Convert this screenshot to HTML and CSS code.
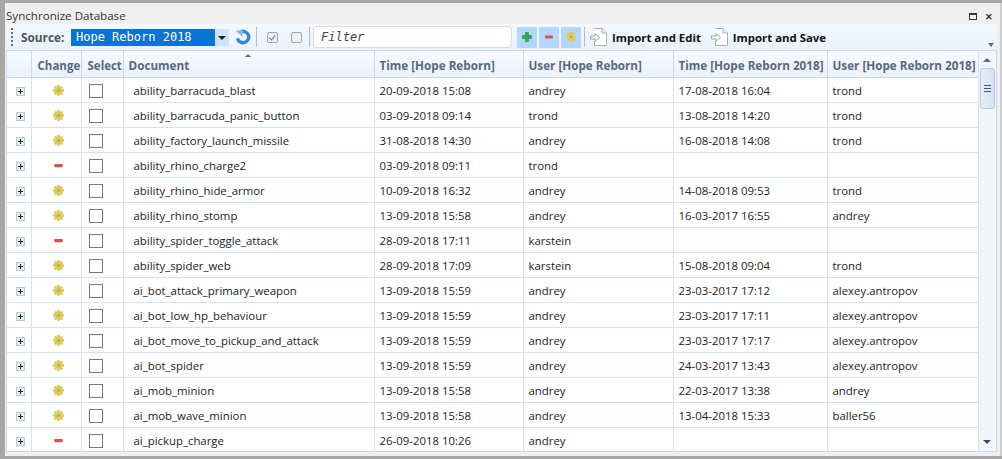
FILE: index.html
```html
<!DOCTYPE html>
<html lang="en">
<head>
    <meta charset="UTF-8">
    <title>Synchronize Database</title>
    <link rel="stylesheet" href="styles.css">
</head>
<body>
    <svg class="defs" width="0" height="0">
        <symbol id="star" viewBox="0 0 12 12">
            <g stroke="#dccb5e" stroke-width="2.7" stroke-linecap="round">
                <path d="M6 2V10M2 6H10M3.2 3.2L8.8 8.8M8.8 3.2L3.2 8.8"/>
            </g>
            <circle cx="6" cy="6" r="1.3" fill="#bda838"/>
        </symbol>
        <symbol id="minus" viewBox="0 0 12 12">
            <rect x="2" y="4.5" width="8" height="3" rx="1" fill="#d9534f"/>
        </symbol>
        <symbol id="plus" viewBox="0 0 12 12">
            <path d="M4.5 1.5H7.5V4.5H10.5V7.5H7.5V10.5H4.5V7.5H1.5V4.5H4.5Z" fill="#2fa84a" stroke="#1c7d33" stroke-width=".5"/>
        </symbol>
        <symbol id="doc" viewBox="0 0 20 20">
            <path d="M5.5 1.5H13L17.5 6V18.5H5.5V14" fill="#fff" stroke="#a9b0ae"/>
            <path d="M13 1.5V6H17.5" fill="#eef1f0" stroke="#a9b0ae"/>
            <path d="M1.5 9H6V6.5L10.5 10.5L6 14.5V12H1.5Z" fill="#f4f7f5" stroke="#9aa5a1"/>
        </symbol>
    </svg>

    <div class="window">
        <div class="titlebar">
            <span class="title">Synchronize Database</span>
            <span class="win-buttons">
                <span class="btn-max"></span>
                <span class="btn-close">&#10005;</span>
            </span>
        </div>

        <div class="toolbar">
            <span class="grip"></span>
            <span class="source-label">Source:</span>
            <div class="combo">
                <span class="combo-text">Hope Reborn 2018</span>
                <span class="combo-arrow"></span>
            </div>
            <svg class="refresh" width="16" height="16" viewBox="0 0 18 18">
                <path d="M5.6 3.6A6.4 6.4 0 1 1 2.8 10.6" fill="none" stroke="#2a8ad4" stroke-width="3.8"/>
                <path d="M0.5 2L8.6 1.5V9Z" fill="#7cc0ee"/>
            </svg>
            <span class="sep"></span>
            <span class="tool-check is-checked"></span>
            <span class="tool-check"></span>
            <span class="sep"></span>
            <input class="filter" type="text" placeholder="Filter">
            <span class="toggles">
                <span class="toggle"><svg width="12" height="12"><use href="#plus"/></svg></span>
                <span class="toggle"><svg width="12" height="12"><use href="#minus"/></svg></span>
                <span class="toggle"><svg width="12" height="12"><use href="#star"/></svg></span>
            </span>
            <span class="sep"></span>
            <span class="action"><svg width="20" height="20"><use href="#doc"/></svg>Import and Edit</span>
            <span class="action"><svg width="20" height="20"><use href="#doc"/></svg>Import and Save</span>
            <span class="overflow"></span>
        </div>

        <div class="grid-wrap">
            <div class="grid-scroll">
                <table class="grid">
                    <colgroup>
                        <col class="c-exp"><col class="c-change"><col class="c-select"><col class="c-doc">
                        <col class="c-time"><col class="c-user"><col class="c-time2"><col class="c-user2">
                    </colgroup>
                    <thead>
                        <tr>
                            <th></th>
                            <th class="narrow">Change</th>
                            <th class="narrow">Select</th>
                            <th class="sorted">Document</th>
                            <th>Time [Hope Reborn]</th>
                            <th>User [Hope Reborn]</th>
                            <th>Time [Hope Reborn 2018]</th>
                            <th>User [Hope Reborn 2018]</th>
                        </tr>
                    </thead>
                    <tbody id="rows"></tbody>
                </table>
            </div>
            <div class="scrollbar">
                <span class="arrow-up"></span>
                <div class="thumb"><span class="thumb-grip"></span></div>
                <span class="arrow-down"></span>
            </div>
        </div>
    </div>

    <script>
        const data = [
            ['star', 'ability_barracuda_blast', '20-09-2018 15:08', 'andrey', '17-08-2018 16:04', 'trond'],
            ['star', 'ability_barracuda_panic_button', '03-09-2018 09:14', 'trond', '13-08-2018 14:20', 'trond'],
            ['star', 'ability_factory_launch_missile', '31-08-2018 14:30', 'andrey', '16-08-2018 14:08', 'trond'],
            ['minus', 'ability_rhino_charge2', '03-09-2018 09:11', 'trond', '', ''],
            ['star', 'ability_rhino_hide_armor', '10-09-2018 16:32', 'andrey', '14-08-2018 09:53', 'trond'],
            ['star', 'ability_rhino_stomp', '13-09-2018 15:58', 'andrey', '16-03-2017 16:55', 'andrey'],
            ['minus', 'ability_spider_toggle_attack', '28-09-2018 17:11', 'karstein', '', ''],
            ['star', 'ability_spider_web', '28-09-2018 17:09', 'karstein', '15-08-2018 09:04', 'trond'],
            ['star', 'ai_bot_attack_primary_weapon', '13-09-2018 15:59', 'andrey', '23-03-2017 17:12', 'alexey.antropov'],
            ['star', 'ai_bot_low_hp_behaviour', '13-09-2018 15:59', 'andrey', '23-03-2017 17:11', 'alexey.antropov'],
            ['star', 'ai_bot_move_to_pickup_and_attack', '13-09-2018 15:59', 'andrey', '23-03-2017 17:17', 'alexey.antropov'],
            ['star', 'ai_bot_spider', '13-09-2018 15:59', 'andrey', '24-03-2017 13:43', 'alexey.antropov'],
            ['star', 'ai_mob_minion', '13-09-2018 15:58', 'andrey', '22-03-2017 13:38', 'andrey'],
            ['star', 'ai_mob_wave_minion', '13-09-2018 15:58', 'andrey', '13-04-2018 15:33', 'baller56'],
            ['minus', 'ai_pickup_charge', '26-09-2018 10:26', 'andrey', '', '']
        ];

        document.getElementById('rows').innerHTML = data.map(row => `
            <tr>
                <td class="cell-exp"><span class="expander"></span></td>
                <td class="cell-change"><svg class="change-icon" width="13" height="13"><use href="#${row[0]}"/></svg></td>
                <td class="cell-select"><span class="check"></span></td>
                <td class="doc">${row[1]}</td>
                <td>${row[2]}</td>
                <td>${row[3]}</td>
                <td>${row[4]}</td>
                <td>${row[5]}</td>
            </tr>
        `).join('');
    </script>
</body>
</html>
```

FILE: styles.css
```css
html, body {
    height: 100%;
}

body {
    margin: 0;
    overflow: hidden;
    background-color: #a6a6a6;
    font-family: "Open Sans", "Noto Sans", sans-serif;
    font-size: 11.4px;
    color: #222;
}

.defs {
    position: absolute;
}

.window {
    box-sizing: border-box;
    height: 453px;
    margin: 3px 0 0 5px;
    padding: 0 3px 4px 1px;
    border-right: 2px solid #cfcfcf;
    background-color: #efefef;
    display: flex;
    flex-direction: column;
}

.titlebar {
    height: 21px;
    flex: none;
    display: flex;
    align-items: center;
    justify-content: space-between;
    color: #333;
}

.title {
    margin-top: 3px;
    font-size: 11.6px;
}

.win-buttons {
    display: flex;
    align-items: center;
    gap: 8px;
    margin-top: 5px;
    margin-right: 4px;
}

.btn-max {
    width: 6px;
    height: 4px;
    border: 1px solid #333;
    border-top-width: 2px;
}

.btn-close {
    font-size: 9px;
    line-height: 9px;
    font-weight: 700;
    color: #333;
}

.toolbar {
    height: 26px;
    flex: none;
    display: flex;
    align-items: center;
    position: relative;
    background: linear-gradient(#f3f8fe, #eaf2fb);
    border-radius: 3px 3px 0 0;
}

.grip {
    width: 2px;
    height: 18px;
    margin-left: 5px;
    background: repeating-linear-gradient(#667 0, #667 2px, transparent 2px, transparent 4px);
}

.source-label {
    margin-left: 8px;
    width: 49px;
    font-size: 11.8px;
    font-weight: 700;
    color: #4a5560;
}

.combo {
    display: flex;
    width: 158px;
    height: 17px;
    margin-left: 1px;
}

.combo-text {
    flex: 1;
    padding-left: 5px;
    background-color: #0a74d6;
    color: #fff;
    font-family: "DejaVu Sans Mono", monospace;
    font-size: 12px;
    line-height: 17px;
}

.combo-arrow {
    width: 14px;
    background-color: #cfe4f9;
    position: relative;
}

.combo-arrow::after {
    content: "";
    position: absolute;
    left: 3px;
    top: 7px;
    border: 4px solid transparent;
    border-top-color: #222;
    border-bottom-width: 0;
}

.refresh {
    margin: 0 1px 0 6px;
}

.sep {
    width: 1px;
    height: 20px;
    margin: 0 4px;
    background-color: #b4bcc4;
}

.tool-check {
    width: 9px;
    height: 9px;
    margin-left: 6px;
    border: 1px solid #a4a4a4;
    border-radius: 2px;
    background-color: #f0f1f2;
    position: relative;
}

.tool-check + .tool-check {
    margin-left: 13px;
    margin-right: 3px;
}

.tool-check.is-checked::after {
    content: "";
    position: absolute;
    left: 2px;
    top: 1px;
    width: 3px;
    height: 5px;
    border: solid #777;
    border-width: 0 1.5px 1.5px 0;
    transform: rotate(40deg);
}

.filter {
    box-sizing: border-box;
    width: 199px;
    height: 22px;
    padding: 0 7px;
    margin: 0 5px 0 -1px;
    border: 1px solid #d5dde6;
    border-radius: 3px;
    background-color: #fff;
    font-family: "DejaVu Sans Mono", monospace;
    font-style: italic;
    font-size: 12px;
    outline: none;
}

.filter::placeholder {
    color: #444;
    opacity: 1;
}

.toggles {
    display: flex;
    gap: 2px;
    margin-right: -1px;
}

.toggle {
    width: 20px;
    height: 21px;
    display: flex;
    align-items: center;
    justify-content: center;
    background-color: #b3d7fb;
}

.action {
    display: flex;
    align-items: center;
    gap: 3px;
    font-size: 11.4px;
    font-weight: 700;
    color: #111;
    margin-right: 9px;
}

.overflow {
    position: absolute;
    right: 3px;
    bottom: 3px;
    width: 0;
    height: 0;
    border: 3px solid transparent;
    border-top: 4px solid #667;
    border-bottom-width: 0;
}

.grid-wrap {
    flex: 1;
    min-height: 0;
    display: flex;
    background-color: #fff;
    border: 1px solid #c9d9ec;
}

.grid-scroll {
    flex: 1;
    min-width: 0;
    overflow: hidden;
}

.grid {
    width: 972px;
    table-layout: fixed;
    border-collapse: collapse;
}

.c-exp { width: 24px; }
.c-change { width: 50px; }
.c-select { width: 42px; }
.c-doc { width: 251px; }
.c-time { width: 149px; }
.c-user { width: 150px; }
.c-time2 { width: 154px; }
.c-user2 { width: 152px; }

th, td {
    box-sizing: border-box;
    padding: 2px 0 0 5px;
    white-space: nowrap;
    overflow: hidden;
    border-right: 1px solid #d4e2f2;
    border-bottom: 1px solid #d4e2f2;
    text-align: left;
}

th {
    height: 26px;
    padding-top: 3px;
    font-size: 11.7px;
    font-weight: 700;
    color: #56697f;
    background: linear-gradient(#f8fbff, #e9f1fb);
    border-bottom-color: #c9d9ec;
    border-right-color: #c9d9ec;
}

td {
    height: 25px;
    color: #222;
}

th.narrow {
    padding-left: 6px;
    font-size: 11.5px;
}

td.cell-exp {
    padding: 1px 0 0 9px;
}

td.cell-change {
    padding: 0 0 0 20px;
}

td.cell-select {
    padding: 2px 0 0 7px;
}

td.doc {
    padding-left: 10px;
}

th.sorted {
    position: relative;
}

th.sorted::after {
    content: "";
    position: absolute;
    left: 121px;
    top: 3px;
    border: 3px solid transparent;
    border-bottom: 3px solid #667;
    border-top-width: 0;
}

.expander {
    display: inline-block;
    box-sizing: border-box;
    width: 9px;
    height: 9px;
    vertical-align: middle;
    border: 1px solid #b9c6d6;
    background:
        linear-gradient(#222, #222) center / 5px 1px no-repeat,
        linear-gradient(#222, #222) center / 1px 5px no-repeat,
        #e8eef6;
}

.change-icon {
    vertical-align: middle;
}

.check {
    display: inline-block;
    box-sizing: border-box;
    width: 14px;
    height: 14px;
    vertical-align: middle;
    border: 1px solid #777;
    background-color: #fff;
}

.scrollbar {
    width: 17px;
    flex: none;
    position: relative;
    background-color: #f2f6fc;
    border-left: 1px solid #d4e2f2;
}

.arrow-up, .arrow-down {
    position: absolute;
    left: 4px;
    border: 4px solid transparent;
}

.arrow-up {
    top: 7px;
    border-bottom-color: #5c6b80;
    border-top-width: 0;
}

.arrow-down {
    bottom: 7px;
    border-top-color: #3d4c66;
    border-bottom-width: 0;
}

.thumb {
    box-sizing: border-box;
    width: 15px;
    height: 41px;
    margin: 17px 0 0 1px;
    display: flex;
    align-items: center;
    justify-content: center;
    border: 1px solid #b8cbe0;
    border-radius: 3px;
    background: linear-gradient(90deg, #e4edf8, #d4e2f3);
}

.thumb-grip {
    width: 7px;
    height: 5px;
    border-top: 1px solid #556;
    border-bottom: 1px solid #556;
    background: linear-gradient(#556, #556) center / 100% 1px no-repeat;
}
```
